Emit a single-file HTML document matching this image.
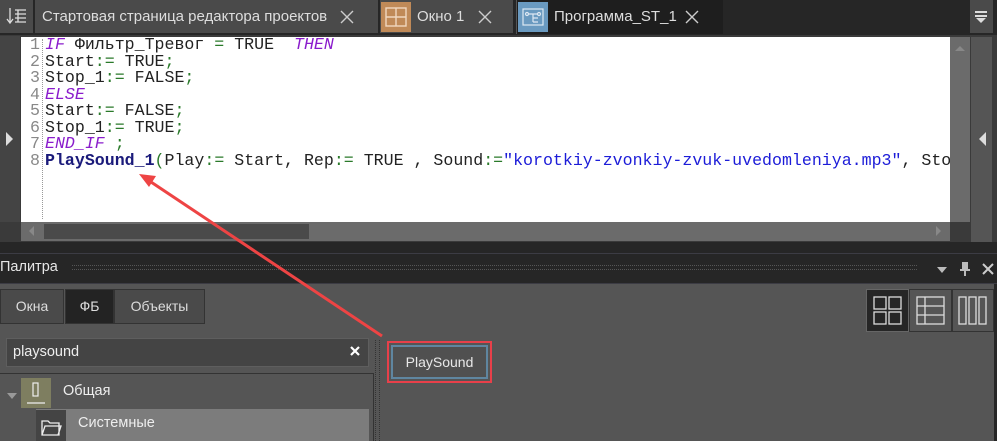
<!DOCTYPE html>
<html><head><meta charset="utf-8"><style>
*{margin:0;padding:0;box-sizing:border-box}
body{width:997px;height:441px;background:#555;overflow:hidden;position:relative;font-family:"Liberation Sans",sans-serif}
.a{position:absolute}
.code{font-family:"Liberation Mono",monospace;font-size:16.6px;line-height:16.5px;white-space:pre;color:#222}
.k{color:#8a1ccc;font-style:italic}
.g{color:#2a7a2a}
.s{color:#1c1cd8}
.b{color:#1a1a7a;font-weight:bold}
.tab{color:#ddd;font-size:15px}
</style></head><body>
<!-- tab bar -->
<div class="a" style="left:0;top:0;width:997px;height:35px;background:#262626"></div>
<div class="a" style="left:0;top:0;width:33px;height:33px;background:#4a4a4a"></div>
<svg class="a" style="left:6px;top:6px" width="22" height="22" viewBox="0 0 22 22" fill="none" stroke="#ddd" stroke-width="1.3"><path d="M4 2v14M1 13l3 4 3-4M9 4h11M9 8h11M9 12h11M9 16h11M12 4v12"/></svg>
<div class="a" style="left:35px;top:0;width:343px;height:33px;background:#4a4a4a"></div>
<div class="a tab" style="left:42px;top:8px">Стартовая страница редактора проектов</div>
<svg class="a" style="left:340px;top:10px" width="14" height="14" stroke="#ccc" stroke-width="1.4"><path d="M1 1l12 12M13 1L1 13"/></svg>
<div class="a" style="left:380px;top:0;width:133px;height:33px;background:#4a4a4a"></div>
<div class="a" style="left:381px;top:2px;width:30px;height:30px;background:#c08a58"></div>
<svg class="a" style="left:385px;top:7px" width="22" height="20" fill="none" stroke="#f0d8c0" stroke-width="1.4"><rect x="1" y="1" width="20" height="18"/><path d="M11 1v18M1 10h20"/></svg>
<div class="a tab" style="left:417px;top:8px">Окно 1</div>
<svg class="a" style="left:478px;top:10px" width="14" height="14" stroke="#ccc" stroke-width="1.4"><path d="M1 1l12 12M13 1L1 13"/></svg>
<div class="a" style="left:516px;top:0;width:207px;height:34px;background:#1e1e1e;border-left:1px solid #555"></div>
<div class="a" style="left:518px;top:2px;width:30px;height:30px;background:#6a9ac0"></div>
<svg class="a" style="left:522px;top:8px" width="22" height="18" fill="none" stroke="#dde8f2" stroke-width="1.2"><rect x="1" y="1" width="20" height="16"/><circle cx="5" cy="6" r="1.5"/><circle cx="17" cy="6" r="1.5"/><path d="M7 6h8M11 6v8M11 10h5M11 14h5"/></svg>
<div class="a tab" style="left:554px;top:8px">Программа_ST_1</div>
<svg class="a" style="left:685px;top:10px" width="14" height="14" stroke="#ccc" stroke-width="1.4"><path d="M1 1l12 12M13 1L1 13"/></svg>
<div class="a" style="left:970px;top:0;width:23px;height:33px;background:#4a4a4a"></div>
<svg class="a" style="left:974px;top:10px" width="14" height="14" fill="#ddd"><rect x="1" y="1" width="12" height="2"/><rect x="1" y="5" width="12" height="2"/><path d="M2 8h10l-5 5z"/></svg>
<!-- editor area -->
<div class="a" style="left:0;top:35px;width:997px;height:207px;background:#3a3a3a"></div>
<div class="a" style="left:0;top:36px;width:20px;height:186px;background:#444"></div>
<svg class="a" style="left:5px;top:131px" width="9" height="16"><path d="M1 1l7 7-7 7z" fill="#ddd"/></svg>
<div class="a" style="left:21px;top:37px;width:929px;height:185px;background:#fff"></div>
<div class="a" style="left:42px;top:39px;height:180px;border-left:1px dotted #999"></div>
<div class="a code" style="left:30px;top:37px;color:#888;text-align:right;width:10px">1
2
3
4
5
6
7
8</div>
<div class="a code" style="left:45px;top:37px;width:905px;overflow:hidden"><span class="k">IF</span> Фильтр_Тревог <span class="g">=</span> TRUE  <span class="k">THEN</span>
Start<span class="g">:=</span> TRUE<span class="g">;</span>
Stop_1<span class="g">:=</span> FALSE<span class="g">;</span>
<span class="k">ELSE</span>
Start<span class="g">:=</span> FALSE<span class="g">;</span>
Stop_1<span class="g">:=</span> TRUE<span class="g">;</span>
<span class="k">END_IF</span> <span class="g">;</span>
<span class="b">PlaySound_1</span><span class="g">(</span>Play<span class="g">:=</span> Start, Rep<span class="g">:=</span> TRUE , Sound<span class="g">:=</span><span class="s">"korotkiy-zvonkiy-zvuk-uvedomleniya.mp3"</span>, Stop_1)</div>
<div class="a" style="left:950px;top:37px;width:20px;height:185px;background:#6b6b6b"></div>
<svg class="a" style="left:954px;top:45px" width="12" height="7"><path d="M1 6l5-5 5 5z" fill="#888"/></svg>
<div class="a" style="left:971px;top:37px;width:21px;height:205px;background:#555"></div>
<svg class="a" style="left:978px;top:131px" width="9" height="16"><path d="M8 1L1 8l7 7z" fill="#ddd"/></svg>
<div class="a" style="left:21px;top:222px;width:929px;height:19px;background:#6b6b6b"></div>
<div class="a" style="left:44px;top:224px;width:265px;height:15px;background:#4a4a4a"></div>
<div class="a" style="left:21px;top:222px;width:22px;height:19px;background:#6b6b6b"></div>
<svg class="a" style="left:28px;top:225px" width="7" height="12"><path d="M6 1L1 6l5 5z" fill="#888"/></svg>
<svg class="a" style="left:935px;top:225px" width="7" height="12"><path d="M1 1l5 5-5 5z" fill="#888"/></svg>
<!-- palette header -->
<div class="a" style="left:0;top:242px;width:997px;height:42px;background:#262626"></div>
<div class="a" style="left:0;top:253px;width:997px;height:1px;background:#3c3c44"></div>
<div class="a" style="left:0;top:283px;width:997px;height:1px;background:#3c3c44"></div>
<div class="a" style="left:0;top:259px;color:#e6e6e6;font-size:14.5px">Палитра</div>
<div class="a" style="left:72px;top:265px;width:845px;height:5px;border-top:1px dotted #555;border-bottom:1px dotted #555"></div>
<svg class="a" style="left:937px;top:267px" width="10" height="6"><path d="M0 0h10L5 6z" fill="#bbb"/></svg>
<svg class="a" style="left:960px;top:262px" width="10" height="14" fill="#bbb"><rect x="2" y="0" width="6" height="7"/><rect x="0" y="7" width="10" height="2"/><rect x="4" y="9" width="2" height="5"/></svg>
<svg class="a" style="left:982px;top:263px" width="12" height="12" stroke="#ccc" stroke-width="2"><path d="M1 1l10 10M11 1L1 11"/></svg>
<!-- body -->
<div class="a" style="left:0;top:289px;width:64px;height:35px;background:#4a4a4a;border:1px solid #333;color:#ddd;font-size:14px;text-align:center;line-height:33px">Окна</div>
<div class="a" style="left:65px;top:289px;width:49px;height:35px;background:#232323;border:1px solid #333;color:#ddd;font-size:14px;text-align:center;line-height:33px">ФБ</div>
<div class="a" style="left:114px;top:289px;width:91px;height:35px;background:#4a4a4a;border:1px solid #333;color:#ddd;font-size:14px;text-align:center;line-height:33px">Объекты</div>
<div class="a" style="left:6px;top:338px;width:363px;height:29px;background:#444;border:1px solid #5e5e5e"></div>
<div class="a" style="left:13px;top:344px;color:#eee;font-size:14.5px">playsound</div>
<svg class="a" style="left:350px;top:346px" width="10" height="10" stroke="#fff" stroke-width="2.2"><path d="M1 1l8 8M9 1L1 9"/></svg>
<div class="a" style="left:0;top:373px;width:374px;height:68px;border-top:1px solid #333;border-right:1px solid #333"></div>
<svg class="a" style="left:7px;top:393px" width="10" height="6"><path d="M0 0h10L5 6z" fill="#999"/></svg>
<div class="a" style="left:21px;top:378px;width:30px;height:30px;background:#7e7e60"></div>
<svg class="a" style="left:23px;top:380px" width="26" height="26" fill="none" stroke="#eee" stroke-width="1.2"><rect x="10" y="3" width="5" height="13"/><path d="M4 23h18"/></svg>
<div class="a" style="left:63px;top:383px;color:#eee;font-size:14.5px">Общая</div>
<div class="a" style="left:36px;top:409px;width:333px;height:32px;background:#7c7c7c"></div>
<div class="a" style="left:36px;top:410px;width:30px;height:31px;background:#444"></div>
<svg class="a" style="left:40px;top:417px" width="22" height="20" fill="none" stroke="#eee" stroke-width="1.3"><path d="M2 4h6l2 2h9v12H2z M2 18l3-9h16l-3 9"/></svg>
<div class="a" style="left:78px;top:415px;color:#eee;font-size:14.5px">Системные</div>
<div class="a" style="left:375px;top:340px;width:5px;height:101px;border-left:1px dotted #333;border-right:1px dotted #333"></div>
<!-- PlaySound button -->
<div class="a" style="left:387px;top:341px;width:105px;height:42px;border:2px solid #e8404a"></div>
<div class="a" style="left:391px;top:345px;width:97px;height:34px;border:2px solid #5f86a0;background:#505050;color:#e8e8e8;font-size:14px;text-align:center;line-height:30px">PlaySound</div>
<!-- view buttons -->
<div class="a" style="left:866px;top:289px;width:43px;height:43px;background:#262626;border:1px solid #666"></div>
<svg class="a" style="left:873px;top:296px" width="30" height="30" fill="none" stroke="#ddd" stroke-width="1.3"><rect x="1" y="1" width="12" height="12"/><rect x="16" y="1" width="12" height="12"/><rect x="1" y="16" width="12" height="12"/><rect x="16" y="16" width="12" height="12"/></svg>
<div class="a" style="left:909px;top:289px;width:43px;height:43px;background:#555;border:1px solid #333"></div>
<svg class="a" style="left:916px;top:296px" width="30" height="30" fill="none" stroke="#ddd" stroke-width="1.3"><rect x="1" y="1" width="27" height="27"/><path d="M1 10h27M1 19h27M9 1v27"/></svg>
<div class="a" style="left:952px;top:289px;width:42px;height:43px;background:#555;border:1px solid #333"></div>
<svg class="a" style="left:958px;top:296px" width="30" height="30" fill="none" stroke="#ddd" stroke-width="1.3"><rect x="1" y="1" width="7" height="27"/><rect x="11" y="1" width="7" height="27"/><rect x="21" y="1" width="7" height="27"/></svg>
<div class="a" style="left:994px;top:284px;width:3px;height:157px;background:#262626"></div>
<!-- arrow -->
<svg class="a" style="left:0;top:0" width="997" height="441"><line x1="382" y1="336" x2="148" y2="180" stroke="#ee4444" stroke-width="3"/><path d="M139 174L156 176L149 187z" fill="#ee4444"/></svg>
</body></html>
